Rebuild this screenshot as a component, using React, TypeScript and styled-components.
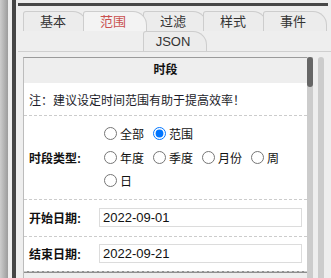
import React, { useState } from 'react'
import styled, { createGlobalStyle, css } from 'styled-components'

const GlobalStyle = createGlobalStyle`
  html, body {
    margin: 0;
    padding: 0;
    background: #eeeeee;
  }
  body {
    font-family: "Liberation Sans", "Noto Sans CJK SC", sans-serif;
    font-size: 12px;
    color: #222;
  }
`

const Page = styled.div`
  display: flex;
  height: 278px;
  overflow: hidden;
`

const LeftShade = styled.div`
  width: 8px;
  background: linear-gradient(to right, #cdcdcd, #9c9c9c);
`

const Gutter = styled.div`
  width: 4px;
  background: #eeeeee;
`

const Rail = styled.div`
  width: 4px;
  background: #454545;
`

const Main = styled.div`
  flex: 1;
  display: flex;
  flex-direction: column;
  padding: 3px 0 0 2px;
  min-width: 0;
`

const TopRule = styled.div`
  height: 3px;
  margin-right: 3px;
  background: #484848;
`

const TabBar = styled.div`
  margin-top: 5px;
  padding-left: 5px;
  display: grid;
  grid-template-columns: repeat(5, 60px);
  grid-template-rows: 20px 20px;
  border-bottom: 1px solid #cfcfcf;
`

const Tab = styled.div<{ $active?: boolean; $col?: number; $row?: number }>`
  width: 64px;
  height: 20px;
  box-sizing: border-box;
  grid-column: ${(p) => p.$col ?? 'auto'};
  grid-row: ${(p) => p.$row ?? 'auto'};
  border: 1px solid #cdcdcd;
  border-bottom: none;
  border-radius: 3px 14px 0 0;
  background: #ececec;
  color: #333;
  font-size: 13px;
  line-height: 19px;
  text-align: center;
  padding-right: 4px;
  cursor: pointer;
  ${(p) =>
    p.$active &&
    css`
      background: #f3f3f3;
      color: #c9504f;
      position: relative;
    `}
`

const Body = styled.div`
  margin-top: 5px;
  padding-left: 5px;
  flex: 1;
  display: flex;
  min-height: 0;
`

const Panel = styled.div`
  width: 284px;
  box-sizing: border-box;
  border-top: 1px solid #9a9a9a;
  border-left: 1px solid #bcbcbc;
  background: #ffffff;
  overflow: hidden;
`

const PanelHead = styled.div`
  height: 25px;
  line-height: 25px;
  background: #eeeeee;
  text-align: center;
  font-weight: bold;
  color: #111;
`

const Note = styled.div`
  height: 32px;
  display: flex;
  align-items: center;
  padding-left: 5px;
  color: #1c1c2a;
`

const Row = styled.div<{ $h?: number }>`
  display: grid;
  grid-template-columns: 70px 1fr;
  align-items: center;
  border-top: 1px dashed #cccccc;
  min-height: ${(p) => (p.$h ? `${p.$h}px` : 'auto')};
`

const Label = styled.div`
  padding-left: 5px;
  font-weight: bold;
  color: #111;
`

const Value = styled.div`
  padding: 0 4px 0 5px;
`

const RadioGroup = styled.div`
  padding: 6px 0 6px;
`

const RadioLine = styled.div`
  display: flex;
  flex-wrap: wrap;
`

const RadioItem = styled.label`
  display: flex;
  align-items: center;
  height: 23.5px;
  margin-right: 4px;
  cursor: pointer;
  color: #111;

  input {
    width: 13px;
    height: 13px;
    margin: 0 3px 0 5px;
  }
`

const DateInput = styled.input`
  width: 203px;
  height: 19px;
  box-sizing: border-box;
  border: 1px solid #dcdcdc;
  padding: 0 3px;
  font-family: "Liberation Sans", sans-serif;
  font-size: 13px;
  color: #111;
  outline: none;
`

const NextSection = styled.div`
  border-top: 1px dashed #cccccc;
  height: 1px;
  background: #8f8f8f;
`

const NextHead = styled.div`
  height: 20px;
  background: #eeeeee;
`

const InnerScroll = styled.div`
  width: 6px;
  background: #cccccc;
`

const Thumb = styled.div`
  height: 30px;
  border-radius: 3px;
  background: #666666;
`

const OuterScroll = styled.div`
  width: 6px;
  margin-left: 5px;
  background: #cccccc;
  border-radius: 3px 3px 0 0;
`

const tabs = ['基本', '范围', '过滤', '样式', '事件']
const row1 = ['全部', '范围']
const row2 = ['年度', '季度', '月份', '周', '日']

export default function App() {
  const [active, setActive] = useState('范围')
  const [kind, setKind] = useState('范围')

  return (
    <>
      <GlobalStyle />
      <Page>
        <LeftShade />
        <Gutter />
        <Rail />
        <Main>
          <TopRule />
          <TabBar>
            {tabs.map((t) => (
              <Tab key={t} $active={active === t} onClick={() => setActive(t)}>
                {t}
              </Tab>
            ))}
            <Tab $col={3} $row={2} $active={active === 'JSON'} onClick={() => setActive('JSON')}>
              JSON
            </Tab>
          </TabBar>
          <Body>
            <Panel>
              <PanelHead>时段</PanelHead>
              <Note>注：建议设定时间范围有助于提高效率！</Note>
              <Row>
                <Label>时段类型:</Label>
                <Value>
                  <RadioGroup>
                    <RadioLine>
                      {row1.map((r) => (
                        <RadioItem key={r}>
                          <input
                            type="radio"
                            name="kind"
                            checked={kind === r}
                            onChange={() => setKind(r)}
                          />
                          {r}
                        </RadioItem>
                      ))}
                    </RadioLine>
                    <RadioLine>
                      {row2.map((r) => (
                        <RadioItem key={r}>
                          <input
                            type="radio"
                            name="kind"
                            checked={kind === r}
                            onChange={() => setKind(r)}
                          />
                          {r}
                        </RadioItem>
                      ))}
                    </RadioLine>
                  </RadioGroup>
                </Value>
              </Row>
              <Row $h={36}>
                <Label>开始日期:</Label>
                <Value>
                  <DateInput defaultValue="2022-09-01" />
                </Value>
              </Row>
              <Row $h={34}>
                <Label>结束日期:</Label>
                <Value>
                  <DateInput defaultValue="2022-09-21" />
                </Value>
              </Row>
              <NextSection />
              <NextHead />
            </Panel>
            <InnerScroll>
              <Thumb />
            </InnerScroll>
            <OuterScroll />
          </Body>
        </Main>
      </Page>
    </>
  )
}
